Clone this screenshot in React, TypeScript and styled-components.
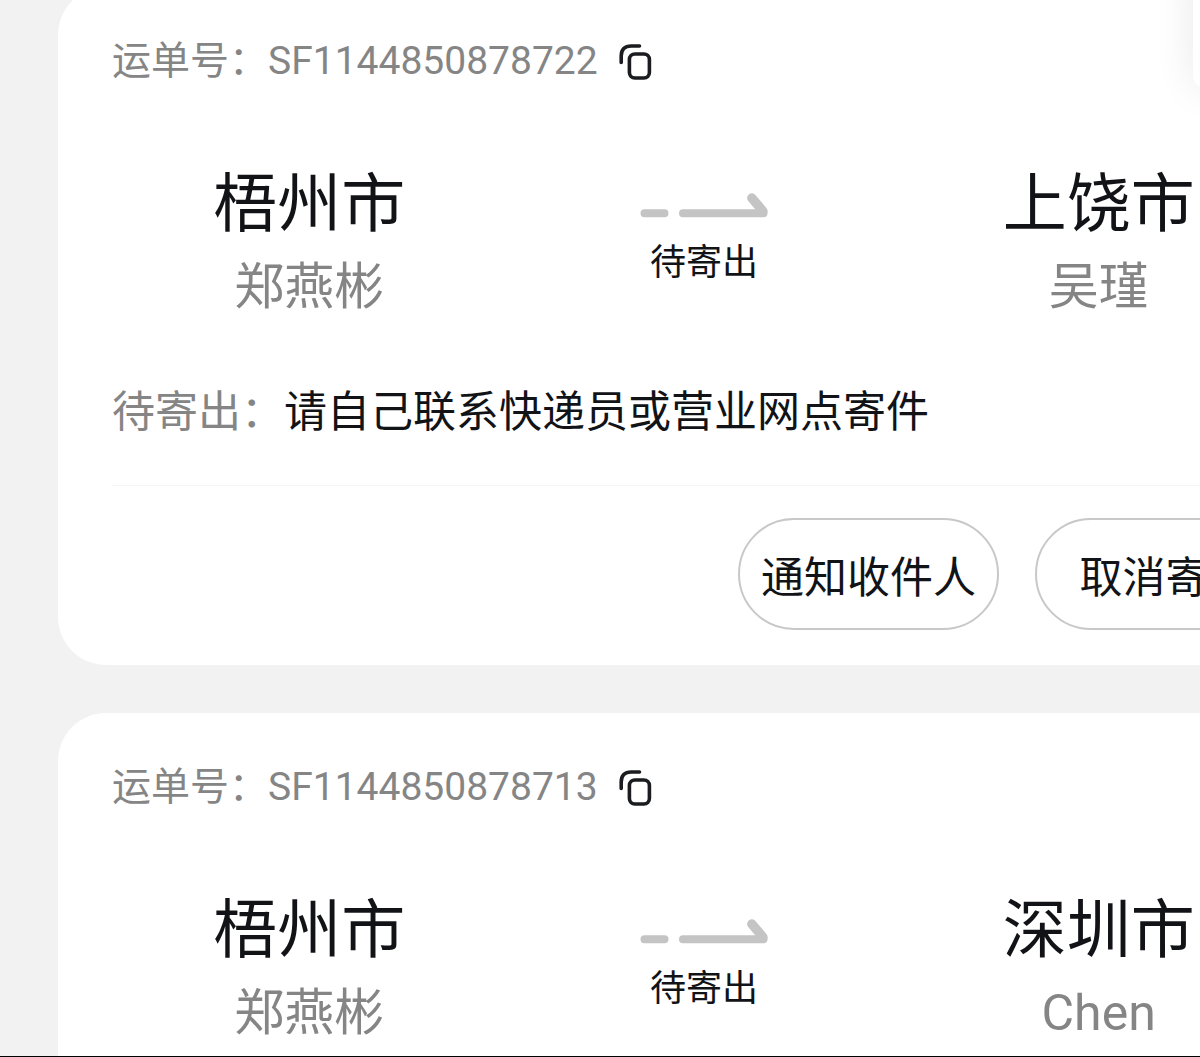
import React from "react";
import styled, { createGlobalStyle } from "styled-components";

const GlobalStyle = createGlobalStyle`
  * { box-sizing: border-box; }
  body {
    margin: 0;
    background: #f2f2f2;
    font-family: Roboto, "Noto Sans CJK SC", sans-serif;
    color: #111317;
  }
`;

const Page = styled.main`
  position: relative;
  height: 100vh;
  overflow: hidden;
  background: #f2f2f2;
  border-bottom: 1px solid #000;
`;

const FloatingPanel = styled.aside`
  position: absolute;
  top: -40px;
  right: -53px;
  width: 60px;
  height: 128px;
  border-radius: 12px;
  background: #fff;
  box-shadow: 0 0 40px rgba(0, 0, 0, 0.09);
`;

const OrderList = styled.div`
  display: flex;
  flex-direction: column;
  gap: 48px;
  margin: -13px -150px 0 58px;
`;

const Card = styled.article`
  display: flex;
  flex-direction: column;
  min-height: 678px;
  padding: 48px 54px 35px;
  border-radius: 48px;
  background: #fff;
`;

const NumberRow = styled.div`
  display: flex;
  align-items: center;
  gap: 20px;
  font-size: 39px;
  line-height: 52px;
  color: #858585;
  white-space: nowrap;
`;

const CopyButton = styled.button`
  display: flex;
  padding: 0;
  border: 0;
  background: none;
  color: #1b1c1f;
  cursor: pointer;
`;

const Route = styled.div`
  display: grid;
  grid-template-columns: repeat(3, 1fr);
  margin-top: 76px;
  text-align: center;
  white-space: nowrap;
`;

const City = styled.div`
  font-size: 64px;
  line-height: 84px;
`;

const Person = styled.div`
  font-size: 50px;
  line-height: 80px;
  color: #858585;
`;

const Progress = styled.div`
  display: flex;
  flex-direction: column;
  align-items: center;
  gap: 18px;
  padding-top: 29px;
  font-size: 36px;
  line-height: 50px;
`;

const Notice = styled.p`
  margin: 55px 0 0;
  font-size: 43px;
  line-height: 60px;
  white-space: nowrap;
`;

const NoticeLabel = styled.span`
  color: #858585;
`;

const Actions = styled.div`
  display: flex;
  justify-content: flex-end;
  gap: 36px;
  margin-top: 43px;
  padding-top: 32px;
  border-top: 1px solid #f5f5f5;
`;

const PillButton = styled.button`
  width: 261px;
  height: 112px;
  padding: 0;
  border: 2px solid #c8c8c8;
  border-radius: 56px;
  background: #fff;
  color: inherit;
  font-family: inherit;
  font-size: 43px;
  white-space: nowrap;
  cursor: pointer;
`;

const CopyIcon = () => (
  <svg width="34" height="38" viewBox="0 0 34 38" fill="none" stroke="currentColor" strokeWidth="3.6" aria-hidden="true">
    <path d="M3.2 20.5V14Q3.2 4 13.2 4H21.5" strokeLinecap="round" />
    <rect x="11.4" y="12" width="20" height="24" rx="5.5" />
  </svg>
);

const RouteArrow = () => (
  <svg width="128" height="28" viewBox="0 0 128 28" fill="none" stroke="#c4c4c4" strokeWidth="8" strokeLinecap="round" strokeLinejoin="round" aria-hidden="true">
    <path d="M4.5 21.3H24.5M43 21.3H123.5" />
    <path d="M111.8 6L123 19.2" strokeWidth="9.4" />
  </svg>
);

type Order = {
  number: string;
  from: string;
  sender: string;
  to: string;
  receiver: string;
  notice?: string;
  actions?: string[];
};

const orders: Order[] = [
  {
    number: "SF1144850878722",
    from: "梧州市",
    sender: "郑燕彬",
    to: "上饶市",
    receiver: "吴瑾",
    notice: "请自己联系快递员或营业网点寄件",
    actions: ["通知收件人", "取消寄件"],
  },
  {
    number: "SF1144850878713",
    from: "梧州市",
    sender: "郑燕彬",
    to: "深圳市",
    receiver: "Chen",
  },
];

const OrderCard = ({ order }: { order: Order }) => (
  <Card>
    <NumberRow>
      <span>运单号：{order.number}</span>
      <CopyButton type="button" aria-label="复制">
        <CopyIcon />
      </CopyButton>
    </NumberRow>
    <Route>
      <div>
        <City>{order.from}</City>
        <Person>{order.sender}</Person>
      </div>
      <Progress>
        <RouteArrow />
        <span>待寄出</span>
      </Progress>
      <div>
        <City>{order.to}</City>
        <Person>{order.receiver}</Person>
      </div>
    </Route>
    {order.notice && (
      <Notice>
        <NoticeLabel>待寄出：</NoticeLabel>
        {order.notice}
      </Notice>
    )}
    {order.actions && (
      <Actions>
        {order.actions.map((label) => (
          <PillButton key={label} type="button">
            {label}
          </PillButton>
        ))}
      </Actions>
    )}
  </Card>
);

export default function App() {
  return (
    <>
      <GlobalStyle />
      <Page lang="zh-CN">
        <OrderList>
          {orders.map((order) => (
            <OrderCard key={order.number} order={order} />
          ))}
        </OrderList>
        <FloatingPanel />
      </Page>
    </>
  );
}
